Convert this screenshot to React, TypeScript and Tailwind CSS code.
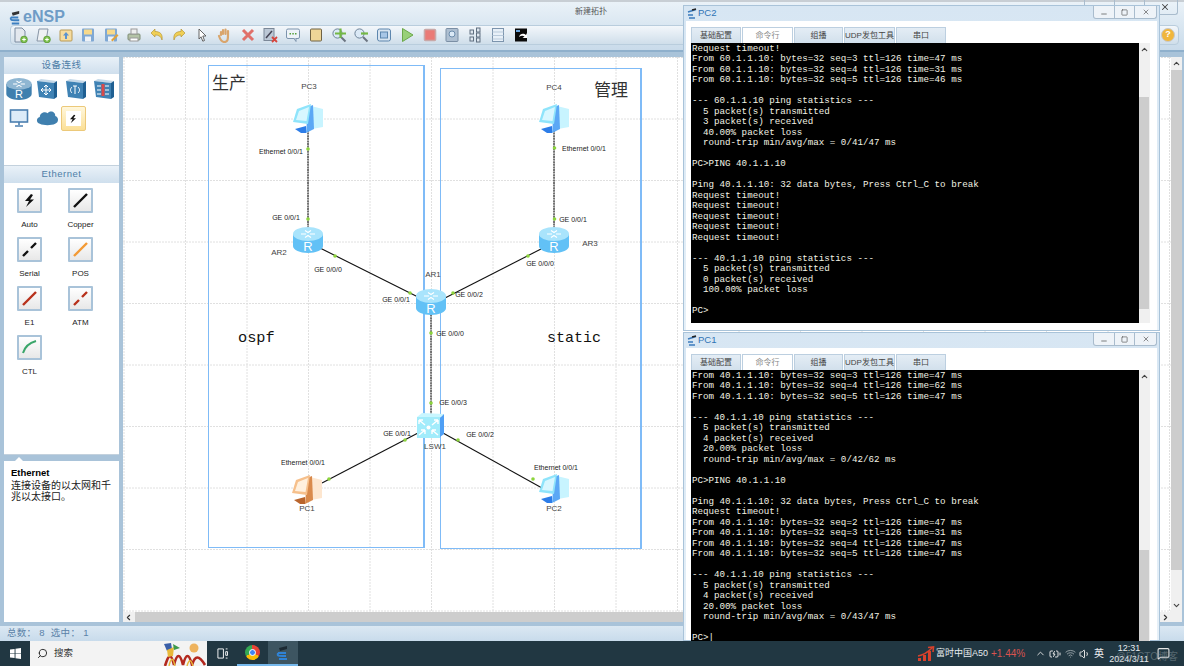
import { Search, ChevronUp, ChevronDown, ChevronLeft, ChevronRight, Minus, Square, X, Volume1, Wifi, MessageSquare, BatteryCharging } from "lucide-react";

const SANS = "font-['Liberation_Sans','Noto_Sans_CJK_SC',sans-serif]";

const pc2Lines = [
  "Request timeout!",
  "From 60.1.1.10: bytes=32 seq=3 ttl=126 time=47 ms",
  "From 60.1.1.10: bytes=32 seq=4 ttl=126 time=31 ms",
  "From 60.1.1.10: bytes=32 seq=5 ttl=126 time=46 ms",
  "",
  "--- 60.1.1.10 ping statistics ---",
  "  5 packet(s) transmitted",
  "  3 packet(s) received",
  "  40.00% packet loss",
  "  round-trip min/avg/max = 0/41/47 ms",
  "",
  "PC>PING 40.1.1.10",
  "",
  "Ping 40.1.1.10: 32 data bytes, Press Ctrl_C to break",
  "Request timeout!",
  "Request timeout!",
  "Request timeout!",
  "Request timeout!",
  "Request timeout!",
  "",
  "--- 40.1.1.10 ping statistics ---",
  "  5 packet(s) transmitted",
  "  0 packet(s) received",
  "  100.00% packet loss",
  "",
  "PC>",
];

const pc1Lines = [
  "From 40.1.1.10: bytes=32 seq=3 ttl=126 time=47 ms",
  "From 40.1.1.10: bytes=32 seq=4 ttl=126 time=62 ms",
  "From 40.1.1.10: bytes=32 seq=5 ttl=126 time=47 ms",
  "",
  "--- 40.1.1.10 ping statistics ---",
  "  5 packet(s) transmitted",
  "  4 packet(s) received",
  "  20.00% packet loss",
  "  round-trip min/avg/max = 0/42/62 ms",
  "",
  "PC>PING 40.1.1.10",
  "",
  "Ping 40.1.1.10: 32 data bytes, Press Ctrl_C to break",
  "Request timeout!",
  "From 40.1.1.10: bytes=32 seq=2 ttl=126 time=47 ms",
  "From 40.1.1.10: bytes=32 seq=3 ttl=126 time=31 ms",
  "From 40.1.1.10: bytes=32 seq=4 ttl=126 time=47 ms",
  "From 40.1.1.10: bytes=32 seq=5 ttl=126 time=47 ms",
  "",
  "--- 40.1.1.10 ping statistics ---",
  "  5 packet(s) transmitted",
  "  4 packet(s) received",
  "  20.00% packet loss",
  "  round-trip min/avg/max = 0/43/47 ms",
  "",
  "PC>|",
];

const links = [
  { x1: 308, y1: 130, x2: 308, y2: 230, thick: true },
  { x1: 554, y1: 130, x2: 554, y2: 230, thick: true },
  { x1: 431, y1: 312, x2: 431, y2: 420, thick: true },
  { x1: 320, y1: 248, x2: 420, y2: 298 },
  { x1: 541, y1: 249, x2: 445, y2: 298 },
  { x1: 418, y1: 433, x2: 322, y2: 483 },
  { x1: 443, y1: 433, x2: 542, y2: 488 },
];

const dots = [
  [308, 149], [308, 219], [335, 256], [410, 293], [453, 293], [528, 256], [554.5, 148],
  [554.5, 219], [431, 333], [431, 403], [405, 440], [458, 440], [329, 479], [533, 479],
];

// centre points, canvas-relative: page x - 123, page y - 57
const labels = [
  { text: "Ethernet 0/0/1", cls: "left-[158px] top-[94px]" },
  { text: "GE 0/0/1", cls: "left-[163px] top-[160px]" },
  { text: "GE 0/0/0", cls: "left-[205px] top-[212px]" },
  { text: "GE 0/0/1", cls: "left-[273px] top-[242px]" },
  { text: "GE 0/0/2", cls: "left-[346px] top-[237px]" },
  { text: "Ethernet 0/0/1", cls: "left-[461px] top-[91px]" },
  { text: "GE 0/0/1", cls: "left-[450px] top-[162px]" },
  { text: "GE 0/0/0", cls: "left-[417px] top-[206px]" },
  { text: "GE 0/0/0", cls: "left-[327px] top-[276px]" },
  { text: "GE 0/0/3", cls: "left-[330px] top-[345px]" },
  { text: "GE 0/0/1", cls: "left-[274px] top-[376px]" },
  { text: "GE 0/0/2", cls: "left-[357px] top-[377px]" },
  { text: "Ethernet 0/0/1", cls: "left-[180px] top-[405px]" },
  { text: "Ethernet 0/0/1", cls: "left-[433px] top-[410px]" },
];

const names = [
  { text: "PC3", cls: "left-[186px] top-[30px]" },
  { text: "PC4", cls: "left-[431px] top-[31px]" },
  { text: "AR2", cls: "left-[156px] top-[196px]" },
  { text: "AR3", cls: "left-[467px] top-[187px]" },
  { text: "AR1", cls: "left-[310px] top-[218px]" },
  { text: "LSW1", cls: "left-[312px] top-[390px]" },
  { text: "PC1", cls: "left-[184px] top-[452px]" },
  { text: "PC2", cls: "left-[431px] top-[452px]" },
];

function PcIcon({ orange = false }: { orange?: boolean }) {
  const c = orange
    ? { rim: "#f6c08c", screen: "#fff0de", mid: "#d98a4c", side: "#fde6cf", base: "#b9652d" }
    : { rim: "#8fe4fb", screen: "#d8f7ff", mid: "#5ba8f5", side: "#c8f4ff", base: "#2d7de8" };
  return (
    <svg viewBox="0 0 32 32" className="w-8 h-8">
      <polygon points="19,3 31,6 31,24 20,26" fill={c.side} />
      <polygon points="16,4 21,2 22,26 14,30" fill={c.mid} />
      <polygon points="5,6 19,1 16,21 1,19" fill={c.rim} />
      <polygon points="7,8 17,4 14.5,18 4,17" fill={c.screen} />
      <polygon points="3,26 14,23 14,30 9,30" fill={c.base} />
    </svg>
  );
}

function RouterIcon({ dark = false }: { dark?: boolean }) {
  const body = dark ? "#3f7fae" : "#62c1f6";
  const top = dark ? "#8fb6d2" : "#a9e4fc";
  return (
    <svg viewBox="0 0 30 26" className="w-full h-full">
      <path d="M0 7 V19 C0 23 7 26 15 26 C23 26 30 23 30 19 V7 Z" fill={body} />
      <ellipse cx="15" cy="7" rx="15" ry="7" fill={top} />
      <path d="M8 7 H13 M17 7 H22 M12 3.5 L15 5.5 M18 3.5 L15 5.5 M12 10.5 L15 8.5 M18 10.5 L15 8.5" stroke="#fff" strokeWidth="1.2" />
      <text x="15" y="24" textAnchor="middle" fontSize="13" fill="#fff" fontFamily="Liberation Sans">R</text>
    </svg>
  );
}

function SwitchIcon() {
  return (
    <svg viewBox="0 0 27 26" className="w-full h-full">
      <polygon points="0,4 5,0 27,1 23,5" fill="#c9f6ff" />
      <polygon points="23,5 27,1 27,21 23,24" fill="#4f9ff5" />
      <rect x="0" y="4" width="23" height="21" fill="#a2ecfb" />
      <path d="M2 7 L8 12 M21 7 L15 12 M2 22 L8 17 M21 22 L15 17 M2 7 H6 M2 7 V11 M21 7 H17 M21 7 V11 M8 17 H4 M8 17 V21 M15 17 H19 M15 17 V21" stroke="#fff" strokeWidth="1.4" fill="none" />
      <circle cx="11.5" cy="14.5" r="2" fill="#fff" />
    </svg>
  );
}

// the three box-shaped device categories in the palette
function BlockIcon({ children }: { children: React.ReactNode }) {
  return (
    <svg viewBox="0 0 22 22" className="w-[22px] h-[22px] mx-auto">
      <polygon points="1,3 5,1 21,3 18,5" fill="#c4d8e8" />
      <polygon points="18,5 21,3 21,19 18,21" fill="#1f5f92" />
      <polygon points="1,3 18,5 18,21 3,19" fill="#3f82b4" />
      {children}
    </svg>
  );
}

function ToolIcon({ id }: { id: number }) {
  const page = <path d="M3 1 H10 L13 4 V15 H3 Z" fill="#e3e8ee" stroke="#7d8ca0" />;
  const plus = <g><circle cx="12" cy="12.5" r="3.4" fill="#7cc04b" stroke="#4d8a2a" strokeWidth=".6" /><path d="M10.2 12.5 H13.8 M12 10.7 V14.3" stroke="#fff" /></g>;
  const disk = (
    <g>
      <rect x="2" y="1.5" width="12" height="13" rx="1" fill="#7fa8d4" />
      <rect x="4" y="2.5" width="8" height="5" fill="#f7d98b" />
      <rect x="5" y="9.5" width="6" height="5" fill="#eef2f7" />
    </g>
  );
  const lens = (c: string, p: string) => (
    <g>
      <circle cx="6.5" cy="6.5" r="4.6" fill="#dbe9f6" stroke="#6d8298" />
      <path d="M10 10 L14.5 14.5" stroke="#6b7480" strokeWidth="2" />
      <path d={p} stroke={c} strokeWidth="2.2" />
    </g>
  );
  const items = [
    <g>{page}{plus}</g>,
    <g><path d="M4 2 H13 L11 14 H2 Z" fill="#eef1f4" stroke="#8795a6" />{plus}</g>,
    <g><rect x="2" y="3" width="12" height="11" rx="1" fill="#f6dc9f" stroke="#b99a55" /><path d="M8 5 L11 8.5 H9 V12 H7 V8.5 H5 Z" fill="#5b93cf" /></g>,
    disk,
    <g>{disk}<path d="M8 13 L14 7 L15.5 8.5 L9.5 14.5 Z" fill="#e0a23a" /></g>,
    <g><rect x="2" y="7" width="12" height="6" rx="1" fill="#b4c3a6" stroke="#7f8c75" /><rect x="5" y="2" width="6" height="5" fill="#eee" stroke="#999" /><rect x="4" y="11" width="8" height="3" fill="#fff" stroke="#999" /></g>,
    <path d="M2 6 L6 2 V4.5 C11 4.5 14 7 13 13 C12 9.5 10 8 6 8 V10 Z" fill="#f0cf55" stroke="#ad8c2a" strokeWidth=".6" />,
    <path d="M14 6 L10 2 V4.5 C5 4.5 2 7 3 13 C4 9.5 6 8 10 8 V10 Z" fill="#f0cf55" stroke="#ad8c2a" strokeWidth=".6" />,
    <path d="M5 2 L12 9 H8.8 L10.5 13.5 L8.8 14.2 L7 9.8 L5 12 Z" fill="#fff" stroke="#555" strokeWidth=".9" />,
    <path d="M4 8 V5 M6 7 V3 M8.5 7 V2.5 M11 7.5 V4 M11 7.5 C11 12 11 15 7.5 15 C4.5 15 3 12 2 9" stroke="#d9a56c" strokeWidth="2.2" fill="none" strokeLinecap="round" />,
    <path d="M3 3 L13 13 M13 3 L3 13" stroke="#e0706a" strokeWidth="3" />,
    <g><rect x="2" y="1.5" width="10" height="12" fill="#bcc8d6" stroke="#7b8898" /><path d="M4 11 L10 4" stroke="#445" strokeWidth="1.5" /><path d="M10 10 L15 15 M15 10 L10 15" stroke="#d7443c" strokeWidth="1.8" /></g>,
    <g><rect x="1.5" y="2" width="13" height="9.5" rx="1.5" fill="#eef3f8" stroke="#7c94ad" /><path d="M9 11.5 L11 14.5 V11.5" fill="#eef3f8" stroke="#7c94ad" /><path d="M4.5 6.7 H6 M7.3 6.7 H8.8 M10 6.7 H11.5" stroke="#55a03c" strokeWidth="1.5" /></g>,
    <rect x="2.5" y="2" width="11" height="12" rx="1" fill="#eed597" stroke="#6f6244" />,
    lens("#74b845", "M4 6.5 H15 M9.5 1.5 V11"),
    lens("#74b845", "M8 6.5 H15"),
    <g><rect x="1.5" y="2" width="13" height="12" rx="2" fill="#d8e4f0" stroke="#5d86ae" /><rect x="4.5" y="5" width="7" height="6" fill="#a8c6e6" stroke="#5d86ae" /></g>,
    <path d="M3.5 1.5 L14 8 L3.5 14.5 Z" fill="#98d078" stroke="#6ba84a" />,
    <rect x="2.5" y="2.5" width="11" height="11" rx="1" fill="#ea7a76" stroke="#c9a8a8" strokeWidth="1.6" />,
    <g><rect x="2" y="1.5" width="12" height="13" rx="1" fill="#aebfd1" stroke="#7b8fa5" /><circle cx="8" cy="7" r="3" fill="#dbe9f6" stroke="#6c8cab" /></g>,
    <g fill="#dfe7ef" stroke="#5f6f80"><rect x="3" y="3" width="3.5" height="4" /><rect x="3" y="10" width="3.5" height="4" /><rect x="9.5" y="1" width="3.5" height="4" /><rect x="9.5" y="6" width="3.5" height="4" /><rect x="9.5" y="11" width="3.5" height="4" /></g>,
    <g><rect x="2.5" y="1.5" width="11" height="13" fill="#e8f0f8" stroke="#7c94ad" /><path d="M2.5 5 H13.5 M2.5 8.5 H13.5 M2.5 12 H13.5" stroke="#b9cadb" /></g>,
    <g><rect x="2" y="1.5" width="12" height="13" fill="#0a0a0a" /><path d="M6 10 C7 6 11 6 13 8 L14 6 V11 H9.5 L11.5 9.5 C10 8.5 8 8.5 6 10 Z" fill="#fff" /><rect x="3" y="3" width="4" height="2" fill="#6aa6e0" /></g>,
  ];
  return <svg viewBox="0 0 16 16" className="w-4 h-4 shrink-0">{items[id]}</svg>;
}

function LinkButton({ label, children }: { label: string; children: React.ReactNode }) {
  return (
    <div className="flex flex-col items-center">
      <div className="w-[25px] h-[25px] border-2 border-[#a9c3d9] bg-gradient-to-b from-white to-[#e8e8e8] flex items-center justify-center rounded-[1px]">
        <svg viewBox="0 0 21 21" className="w-[21px] h-[21px]">{children}</svg>
      </div>
      <span className="mt-[6px] text-[8px] leading-[12px] text-[#222]">{label}</span>
    </div>
  );
}

const bolt = <path d="M12 4 L6 11 H10 L7 17 L15 9.5 H11 L14 5 Z" fill="#111" />;

function Panel({ title, grow, children }: { title: string; grow?: boolean; children: React.ReactNode }) {
  return (
    <div className={grow ? "h-[289px] bg-white flex flex-col border-b border-[#c3d1dd]" : "h-[109px] bg-white flex flex-col border-b border-[#c3d1dd]"}>
      <div className="h-[17px] shrink-0 bg-gradient-to-b from-[#e9f1f8] to-[#cfdfed] flex items-center justify-center text-[9.5px] tracking-[0.5px] text-[#4e7ea8]">{title}</div>
      {children}
    </div>
  );
}

function TermWindow({ title, lines, cls, termH, thumb }: { title: string; lines: string[]; cls: string; termH: string; thumb: string }) {
  const tabs = [
    { t: "基础配置", w: "w-[50px]" },
    { t: "命令行", w: "w-[51px]" },
    { t: "组播", w: "w-[49px]" },
    { t: "UDP发包工具", w: "w-[51px]" },
    { t: "串口", w: "w-[50px]" },
  ];
  return (
    <div className={"absolute left-[683px] w-[477px] bg-gradient-to-b from-[#d7e6f3] to-[#e6f0f8] border border-[#a9c3d9] flex flex-col " + cls}>
      <div className="h-[15px] shrink-0 flex items-start justify-between pl-[2px]">
        <div className="flex items-center h-[15px]">
          <svg viewBox="0 0 12 12" className="w-3 h-3">
            <path d="M2 4 L10 1.5 M2 7 H7 M3 10 H9" stroke="#3b7bbd" strokeWidth="1.6" />
            <path d="M6 2 L10 1" stroke="#222" strokeWidth="1.6" />
          </svg>
          <span className="text-[9.5px] text-[#2f74b5]">{title}</span>
        </div>
        <div className="flex h-[13px] border border-t-0 border-[#a9bccd] rounded-b-[3px] bg-[#eef3f8] mr-[2px]">
          <div className="w-[21px] flex items-center justify-center border-r border-[#a9bccd]"><Minus size={8} strokeWidth={2} className="text-[#444] mt-[3px]" /></div>
          <div className="w-[20px] flex items-center justify-center border-r border-[#a9bccd]"><Square size={7} strokeWidth={2} className="text-[#444]" /></div>
          <div className="w-[21px] flex items-center justify-center"><X size={8} strokeWidth={2} className="text-[#555]" /></div>
        </div>
      </div>
      <div className="flex-1 mx-[2px] bg-white pl-[5px] pr-[7px] pt-[6px] flex flex-col min-h-0">
        <div className="flex h-[16px] shrink-0 gap-[1px]">
          {tabs.map((tab, i) => (
            <div
              key={tab.t}
              className={
                (i === 1 ? "bg-white text-[#888] " : "bg-gradient-to-b from-[#e4edf5] to-[#d2e0ec] text-[#444] ") +
                tab.w +
                " border border-b-0 border-[#bccfe0] flex items-center justify-center text-[8px] whitespace-nowrap"
              }
            >
              {tab.t}
            </div>
          ))}
        </div>
        <div className={"flex shrink-0 " + termH}>
          <div className="flex-1 bg-black pt-[0.5px] pl-[1px] font-['Liberation_Mono',monospace] text-[9.2px] leading-[10.5px] text-[#f2f2e4] whitespace-pre">
            {lines.map((l, i) => (
              <div key={i} className="h-[10.5px]">{l}</div>
            ))}
          </div>
          <div className="w-[11px] bg-[#f0f0f0] flex flex-col items-center relative">
            <ChevronUp size={9} strokeWidth={3} className="text-[#444] mt-[2px]" />
            <div className={"absolute left-0 w-[10px] bg-[#cdcdcd] " + thumb} />
          </div>
        </div>
      </div>
    </div>
  );
}

function Desktop() {
  return (
    <>
      <TermWindow title="PC2" lines={pc2Lines} cls="top-[5px] h-[326px]" termH="h-[280px]" thumb="top-[54px] h-[212px]" />
      <TermWindow title="PC1" lines={pc1Lines} cls="top-[332px] h-[309px]" termH="h-[271px]" thumb="top-[180px] h-[91px]" />
    </>
  );
}

function Taskbar() {
  return (
    <div className="relative z-10 h-[25px] shrink-0 bg-[#213742] flex items-stretch text-white">
      <div className="w-[30px] flex items-center justify-center">
        <svg viewBox="0 0 12 12" className="w-[11px] h-[11px]">
          <path d="M0 1.7 L5 1 V5.6 H0 Z M6 .9 L12 0 V5.6 H6 Z M0 6.4 H5 V11 L0 10.3 Z M6 6.4 H12 V12 L6 11.1 Z" fill="#fff" />
        </svg>
      </div>
      <div className="w-[177px] bg-[#f3f3f3] flex items-center pl-[7px] gap-[6px] relative overflow-hidden">
        <Search size={11} className="text-[#222] -scale-x-100" />
        <span className="text-[9.5px] text-[#333]">搜索</span>
        <svg viewBox="0 0 46 25" className="absolute right-0 top-0 w-[46px] h-[25px]">
          <circle cx="33" cy="7" r="4.5" fill="#eeb35e" />
          <path d="M4 25 C8 12 10 12 13 24 C16 12 19 12 22 24 C25 12 28 12 31 24 C34 14 38 14 44 24" stroke="#b3281e" strokeWidth="2.6" fill="none" />
          <path d="M8 25 C10 16 12 16 14 25 M26 25 C28 18 30 18 32 25" stroke="#e8b93a" strokeWidth="1.4" fill="none" />
          <path d="M3 3 L10 2 L11 8 L6 10 Z" fill="#3a5fa8" />
          <path d="M6 9 L13 6 L12 15 L7 16 Z" fill="#e8b93a" />
          <path d="M12 3 L19 7 L13 9 Z" fill="#3e9a4b" />
        </svg>
      </div>
      <div className="w-[30px] flex items-center justify-center">
        <svg viewBox="0 0 12 12" className="w-[11px] h-[11px]">
          <path d="M1 1 H7 V11 H1 Z M9.5 1 H11.5 M9.5 4 H11.5 V8 H9.5 Z M9.5 11 H11.5" stroke="#fff" fill="none" />
        </svg>
      </div>
      <div className="w-[31px] flex items-center justify-center border-b-2 border-[#76b9ed]">
        <div className="w-[15px] h-[15px] rounded-full bg-[conic-gradient(#ea4335_0deg_120deg,#fbbc05_120deg_240deg,#34a853_240deg_360deg)] flex items-center justify-center">
          <div className="w-[7px] h-[7px] rounded-full bg-[#4285f4] border border-white" />
        </div>
      </div>
      <div className="w-[30px] bg-[#3d5561] border-b-2 border-[#76b9ed] flex items-center justify-center">
        <svg viewBox="0 0 14 16" className="w-[14px] h-[16px]">
          <path d="M3 3 L11 1 L11 4 L4 6 Z" fill="#1c2a33" />
          <path d="M2 8 H10 M2 8 C1 11 3 11 6 11 H10 M3 14 H11" stroke="#2f83d6" strokeWidth="2" fill="none" />
        </svg>
      </div>
      <div className="flex-1" />
      <div className="relative flex items-center h-full pr-[12px]">
        <svg viewBox="0 0 18 16" className="w-[18px] h-[16px] mr-[1px]">
          <path d="M1 15 H4 V12 H1 Z M6 15 H9 V9 H6 Z M11 15 H14 V5 H11 Z" fill="#d8412c" />
          <path d="M1 10 C7 9 11 6 15 2 M11 1.5 L16.5 1 L16 6" stroke="#d8412c" strokeWidth="1.6" fill="none" />
        </svg>
        <span className="text-[9px] text-[#e8ecef] w-[55px] whitespace-nowrap">富时中国A50</span>
        <span className="text-[10px] text-[#d9534f] w-[44px]">+1.44%</span>
        <ChevronUp size={11} className="text-[#e5e5e5] mr-[3px]" />
        <BatteryCharging size={12} className="text-[#e5e5e5] mr-[4px]" />
        <Wifi size={11} className="text-[#9aa5ab] mr-[3px]" />
        <Volume1 size={12} className="text-[#e5e5e5] mr-[3px]" />
        <span className="text-[10px] text-[#eee] w-[10px]">英</span>
        <div className="w-[50px] flex flex-col items-center text-[9px] leading-[11px] text-[#e8ecef]">
          <span>12:31</span>
          <span>2024/3/11</span>
        </div>
        <div className="w-[18px] flex justify-center">
          <MessageSquare size={13} className="text-[#e5e5e5]" />
        </div>
        <span className="absolute right-[6px] top-[8px] text-[10px] text-[#8d9aa1]/50">@51CTO博客</span>
      </div>
    </div>
  );
}

export default function App() {
  const toolIds = Array.from({ length: 23 }, (_, i) => i);
  return (
    <div className={"relative w-[1184px] h-[666px] overflow-hidden flex flex-col " + SANS}>
      <div className="flex-1 min-h-0 flex flex-col bg-[#a9c3d9]">
        {/* header */}
        <div className="h-[52px] shrink-0 bg-gradient-to-b from-[#eaf2f8] to-[#c9dbea] border-t-2 border-[#c8ced4] border-b-2 border-b-[#8fb0cc] relative">
          <div className="absolute left-[9px] top-[3px] flex items-center gap-[1px]">
            <svg viewBox="0 0 14 18" className="w-[13px] h-[17px]">
              <path d="M3 4 L11 2 V5 L4 7 Z" fill="#333" />
              <path d="M2 9 H10 M2 9 C1 12 3 12 6 12 H11 M3 15.5 H11" stroke="#3c7fc0" strokeWidth="2" fill="none" />
            </svg>
            <span className="text-[16px] font-bold text-[#6f9cc6]">eNSP</span>
          </div>
          <span className="absolute left-[575px] top-[4px] text-[8px] text-[#555]">新建拓扑</span>
          <div className="absolute right-[6px] top-[-2px] flex h-[15px] border border-t-0 border-[#a9bccd] rounded-b-[3px]">
            <div className="w-[30px] border-r border-[#a9bccd]" />
            <div className="w-[30px] border-r border-[#a9bccd]" />
            <div className="w-[32px] flex items-center justify-end pr-[7px]"><X size={10} strokeWidth={2.5} className="text-[#444]" /></div>
          </div>
          {/* toolbar */}
          <div className="absolute left-[10px] right-[5px] top-[23px] h-[20px] rounded-[4px] border border-[#b9cddd] bg-gradient-to-b from-[#f3f7fb] to-[#cfdeea] flex items-center pl-[1px] pr-[3px]">
            <div className="flex items-center gap-[6.75px]">
              {toolIds.map((id) => (
                <ToolIcon key={id} id={id} />
              ))}
            </div>
            <div className="ml-auto w-[14px] h-[14px] rounded-full bg-[#f0b63c] border border-[#c9c9c9] flex items-center justify-center text-[9px] font-bold text-white">?</div>
          </div>
        </div>

        {/* body */}
        <div className="flex-1 min-h-0 flex gap-[4px] pl-[4px] pr-[2px] pt-[5px] pb-[4px]">
          {/* sidebar */}
          <div className="w-[115px] shrink-0 flex flex-col">
            <Panel title="设备连线">
              <div className="grid grid-cols-4 gap-y-[8px] px-[1px] pt-[4px]">
                <div className="w-[26px] h-[22px] mx-auto"><RouterIcon dark /></div>
                <BlockIcon>
                  <path d="M5 12 H15 M10 7 V17 M5 12 L7 10 M5 12 L7 14 M15 12 L13 10 M15 12 L13 14 M10 7 L8 9 M10 7 L12 9 M10 17 L8 15 M10 17 L12 15" stroke="#fff" strokeWidth="1" fill="none" />
                </BlockIcon>
                <BlockIcon>
                  <path d="M7 9 C5 11 5 13 7 15 M13 9 C15 11 15 13 13 15 M10 8 V16 M8 8 H12" stroke="#fff" strokeWidth="1" fill="none" />
                </BlockIcon>
                <BlockIcon>
                  <path d="M4 8 H8 M12 8 H16 M4 12 H8 M12 12 H16 M4 16 H8 M12 16 H16" stroke="#fff" strokeWidth="1.2" />
                  <path d="M10 6 V18" stroke="#d94a4a" strokeWidth="3" />
                </BlockIcon>
                <svg viewBox="0 0 20 20" className="w-5 h-5 mx-auto">
                  <rect x="1.5" y="2" width="17" height="12" fill="#dcebf8" stroke="#4b7fb0" strokeWidth="1.6" />
                  <path d="M10 14 V17 M6 18 H14" stroke="#4b7fb0" strokeWidth="1.6" />
                </svg>
                <svg viewBox="0 0 24 18" className="w-[23px] h-[18px] mx-auto mt-[1px]">
                  <path d="M4 15 C0 14 0 9 4 8 C4 3 10 2 12 4 C15 0 21 3 20 7 C24 8 24 14 20 15 C16 17 8 17 4 15 Z" fill="#3f7fae" />
                </svg>
                <div className="mx-auto -ml-[1px] -mt-[2px] w-[25px] h-[25px] border border-[#ecc97a] rounded-[2px] bg-gradient-to-b from-[#fff7dc] to-[#fbdf95] flex items-center justify-center">
                  <div className="w-[15px] h-[15px] bg-white flex items-center justify-center">
                    <svg viewBox="0 0 21 21" className="w-[14px] h-[14px]">{bolt}</svg>
                  </div>
                </div>
              </div>
            </Panel>
            <Panel title="Ethernet" grow>
              <div className="grid grid-cols-[51px_51px] gap-y-[6px] pt-[5px]">
                <LinkButton label="Auto">{bolt}</LinkButton>
                <LinkButton label="Copper"><path d="M4 17 L17 4" stroke="#111" strokeWidth="2.4" /></LinkButton>
                <LinkButton label="Serial"><path d="M4 17 L9 12 M12 9 L17 4" stroke="#111" strokeWidth="2.4" /></LinkButton>
                <LinkButton label="POS"><path d="M4 17 L17 4" stroke="#f39a35" strokeWidth="2.4" /></LinkButton>
                <LinkButton label="E1"><path d="M4 17 L17 4" stroke="#b8321c" strokeWidth="2.4" /></LinkButton>
                <LinkButton label="ATM"><path d="M4 17 L9 12 M12 9 L17 4" stroke="#b8321c" strokeWidth="2.4" /></LinkButton>
                <LinkButton label="CTL"><path d="M4 16 C6 9 10 6 17 4" stroke="#3aa66a" strokeWidth="2" fill="none" /></LinkButton>
              </div>
            </Panel>
            <div className="h-[6px] shrink-0 relative">
              <div className="absolute left-[11px] bottom-0 w-0 h-0 border-x-[4px] border-x-transparent border-b-[4px] border-b-white" />
            </div>
            <div className="flex-1 bg-white pl-[7px] pr-[8px] pt-[6px]">
              <div className="text-[9.5px] leading-[12px] font-bold text-black">Ethernet</div>
              <div className="text-[10px] leading-[10.5px] text-[#222] mt-[2px]">连接设备的以太网和千兆以太接口。</div>
            </div>
          </div>

          {/* canvas */}
          <div className="flex-1 min-w-0 bg-white flex flex-col">
            <div className="flex-1 min-h-0 flex">
              <div className="relative flex-1 overflow-hidden">
                <svg viewBox="123 57 1048 555" className="absolute left-0 top-0 w-[1048px] h-[555px]">
                  {[124, 185.5, 247, 308.5, 370, 431.5, 493, 554.5, 616, 677.5, 739, 800.5, 862, 923.5, 985, 1046.5, 1108, 1169.5].map((x) => (
                    <line key={x} x1={x} y1={57} x2={x} y2={612} stroke="#e0e0e0" strokeDasharray="2 1" />
                  ))}
                  {[57.5, 119, 180.5, 242, 303.5, 365, 426.5, 488, 549.5, 611].map((y) => (
                    <line key={y} x1={123} y1={y} x2={1171} y2={y} stroke="#e0e0e0" strokeDasharray="2 1" />
                  ))}
                  {links.map((l, i) => (
                    <line
                      key={i}
                      x1={l.x1}
                      y1={l.y1}
                      x2={l.x2}
                      y2={l.y2}
                      stroke={l.thick ? "#555" : "#111"}
                      strokeWidth={l.thick ? 1.6 : 1.1}
                      strokeDasharray={l.thick ? "2 .6" : undefined}
                    />
                  ))}
                  {dots.map(([x, y]) => (
                    <circle key={x + "-" + y} cx={x} cy={y} r={1.8} fill="#8cd43c" />
                  ))}
                </svg>

                <div className="absolute left-[85px] top-[8px] w-[217px] h-[483px] border border-r-2 border-[#7fbbf7]" />
                <div className="absolute left-[317px] top-[11px] w-[202px] h-[481px] border border-r-2 border-[#7fbbf7]" />

                <span className="absolute left-[89px] top-[16px] text-[17px] leading-[22px] text-[#333]">生产</span>
                <span className="absolute left-[471px] top-[23px] text-[17px] leading-[22px] text-[#333]">管理</span>
                <span className="absolute left-[115px] top-[272px] font-['Liberation_Mono',monospace] text-[15.3px] leading-[18px] text-[#111]">ospf</span>
                <span className="absolute left-[424px] top-[273px] font-['Liberation_Mono',monospace] text-[15px] leading-[18px] text-[#111]">static</span>

                <div className="absolute left-[169px] top-[46px]"><PcIcon /></div>
                <div className="absolute left-[415px] top-[46px]"><PcIcon /></div>
                <div className="absolute left-[168px] top-[417px]"><PcIcon orange /></div>
                <div className="absolute left-[415px] top-[416px]"><PcIcon /></div>
                <div className="absolute left-[170px] top-[170px] w-[30px] h-[26px]"><RouterIcon /></div>
                <div className="absolute left-[416px] top-[170px] w-[30px] h-[26px]"><RouterIcon /></div>
                <div className="absolute left-[293px] top-[232px] w-[30px] h-[26px]"><RouterIcon /></div>
                <div className="absolute left-[294px] top-[356px] w-[27px] h-[26px]"><SwitchIcon /></div>

                {labels.map((l, i) => (
                  <span key={i} className={"absolute -translate-x-1/2 -translate-y-1/2 text-[7px] leading-[9px] whitespace-nowrap text-[#222] " + l.cls}>{l.text}</span>
                ))}
                {names.map((n) => (
                  <span key={n.text} className={"absolute -translate-x-1/2 -translate-y-1/2 text-[8px] leading-[10px] whitespace-nowrap text-[#444] " + n.cls}>{n.text}</span>
                ))}
              </div>
              <div className="w-[11px] shrink-0 bg-[#f0f0f0] flex flex-col items-center relative">
                <ChevronUp size={9} strokeWidth={3} className="text-[#444] mt-[2px]" />
                <div className="w-full h-[500px] mt-[2px] bg-[#cdcdcd]" />
                <ChevronDown size={9} strokeWidth={3} className="text-[#444] absolute bottom-[2px]" />
              </div>
            </div>
            <div className="h-[10px] shrink-0 bg-[#f0f0f0] flex items-center">
              <ChevronLeft size={9} strokeWidth={3} className="text-[#333] ml-[1px]" />
              <div className="flex-1 h-full bg-[#cdcdcd] mx-[2px]" />
              <ChevronRight size={9} strokeWidth={3} className="text-[#333] mr-[12px]" />
            </div>
          </div>
        </div>

        {/* status bar */}
        <div className="h-[15px] shrink-0 bg-gradient-to-b from-[#dbe8f3] to-[#c8dbeb] flex items-center pl-[7px] text-[9.5px] text-[#5a82a8] tracking-[0.3px]">
          总数： 8&nbsp; 选中： 1
        </div>
      </div>
      <Taskbar />
      <Desktop />
    </div>
  );
}
